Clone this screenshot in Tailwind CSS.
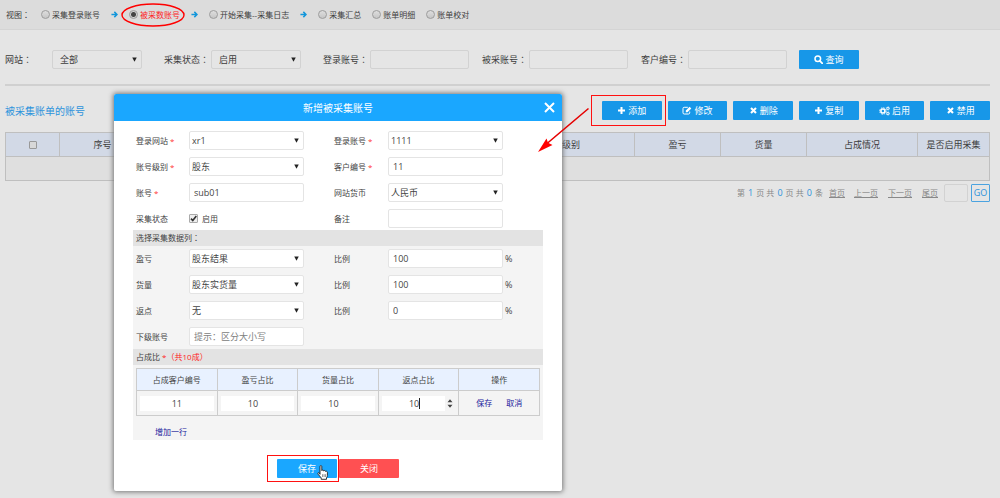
<!DOCTYPE html>
<html lang="zh-CN">
<head>
<meta charset="utf-8">
<title>被采数账号</title>
<script src="https://cdn.jsdelivr.net/npm/@tailwindcss/browser@4"></script>
</head>
<body class="relative min-h-screen overflow-hidden bg-[#e5e5e5] font-['Open_Sans','Noto_Sans_CJK_SC',sans-serif] text-[9px] leading-[12px] text-[#3c3c3c]">

<svg class="hidden">
  <symbol id="arrow" viewBox="0 0 8 8"><path d="M0.5 4H6.5M3.8 1L6.8 4L3.8 7" fill="none" stroke="#1296db" stroke-width="1.7"/></symbol>
  <symbol id="caret" viewBox="0 0 6 6"><path d="M0.3 0.5H5.7L3 5.8Z" fill="#222"/></symbol>
  <symbol id="search" viewBox="0 0 9 9"><circle cx="3.8" cy="3.8" r="2.8" fill="none" stroke="#fff" stroke-width="1.5"/><path d="M5.8 5.8L8.3 8.3" stroke="#fff" stroke-width="1.8" stroke-linecap="round"/></symbol>
  <symbol id="plus" viewBox="0 0 9 9"><path d="M4.5 1V8M1 4.5H8" stroke="#fff" stroke-width="2"/></symbol>
  <symbol id="times" viewBox="0 0 9 9"><path d="M2 2L7 7M7 2L2 7" stroke="#fff" stroke-width="2.1"/></symbol>
  <symbol id="edit" viewBox="0 0 10 9"><path d="M5.8 1.3H2.2Q1 1.3 1 2.5V6.8Q1 8 2.2 8H6.5Q7.7 8 7.7 6.8V5.6" fill="none" stroke="#fff" stroke-width="1"/><path d="M3.8 6.2V4.5L7.6 0.7L9.3 2.4L5.5 6.2Z" fill="#fff"/></symbol>
  <symbol id="cogs" viewBox="0 0 11 10"><circle cx="3.9" cy="5" r="2" fill="none" stroke="#fff" stroke-width="1.5"/><circle cx="3.9" cy="5" r="3.2" fill="none" stroke="#fff" stroke-width="1" stroke-dasharray="1.5 1.01"/><circle cx="8.9" cy="2.4" r="1.1" fill="none" stroke="#fff" stroke-width="1"/><circle cx="8.9" cy="2.4" r="1.8" fill="none" stroke="#fff" stroke-width=".6" stroke-dasharray=".9 .98"/><circle cx="8.9" cy="7.5" r="1.1" fill="none" stroke="#fff" stroke-width="1"/><circle cx="8.9" cy="7.5" r="1.8" fill="none" stroke="#fff" stroke-width=".6" stroke-dasharray=".9 .98"/></symbol>
</svg>

<!-- View switcher -->
<header class="flex h-[30px] items-center gap-[11px] border-b border-[#d4d4d4] bg-[#dcdcdc] pl-[6px] text-[8px]">
  <span class="w-[24px] whitespace-nowrap">视图<span lang="zh-TW" class="font-['Noto_Sans_CJK_TC',sans-serif]">：</span></span>
  <label class="flex items-center gap-[2px]"><input type="radio" name="view" class="size-[9px] appearance-none rounded-full border border-[#9c9c9c] bg-linear-to-b from-[#dedede] to-[#c6c6c6]">采集登录账号</label>
  <svg class="size-[7px]"><use href="#arrow"/></svg>
  <label class="relative flex items-center gap-[2px] text-[#f22]"><input type="radio" name="view" checked class="size-[9px] appearance-none rounded-full border border-[#9c9c9c] bg-[radial-gradient(circle,#444_0_2px,#d2d2d2_3px)]">被采数账号
    <svg class="absolute -top-[6px] -left-[8px] h-[24px] w-[64px]" viewBox="0 0 64 24" fill="none"><ellipse cx="32" cy="12" rx="31" ry="11" stroke="#f00" stroke-width="1.4"/></svg>
  </label>
  <svg class="size-[7px]"><use href="#arrow"/></svg>
  <label class="flex items-center gap-[2px]"><input type="radio" name="view" class="size-[9px] appearance-none rounded-full border border-[#9c9c9c] bg-linear-to-b from-[#dedede] to-[#c6c6c6]">开始采集--采集日志</label>
  <svg class="size-[7px]"><use href="#arrow"/></svg>
  <label class="flex items-center gap-[2px]"><input type="radio" name="view" class="size-[9px] appearance-none rounded-full border border-[#9c9c9c] bg-linear-to-b from-[#dedede] to-[#c6c6c6]">采集汇总</label>
  <label class="flex items-center gap-[2px]"><input type="radio" name="view" class="size-[9px] appearance-none rounded-full border border-[#9c9c9c] bg-linear-to-b from-[#dedede] to-[#c6c6c6]">账单明细</label>
  <label class="flex items-center gap-[2px]"><input type="radio" name="view" class="size-[9px] appearance-none rounded-full border border-[#9c9c9c] bg-linear-to-b from-[#dedede] to-[#c6c6c6]">账单校对</label>
</header>

<main class="pr-[10px] pl-[5px]">
  <!-- Filters -->
  <form class="flex items-center border-b-2 border-[#d0d0d0] pt-5 pb-[15px]">
    <label for="f-site" class="w-[47px]">网站<span lang="zh-TW" class="font-['Noto_Sans_CJK_TC',sans-serif]">：</span></label>
    <span class="relative mr-[22px]">
      <select id="f-site" class="block h-[19px] w-[90px] appearance-none rounded-[2px] border border-[#d2d2d2] pl-[7px]"><option>全部</option></select>
      <svg class="pointer-events-none absolute top-[7px] right-[5px] size-[5px]"><use href="#caret"/></svg>
    </span>
    <label for="f-state" class="w-[47px]">采集状态<span lang="zh-TW" class="font-['Noto_Sans_CJK_TC',sans-serif]">：</span></label>
    <span class="relative mr-[22px]">
      <select id="f-state" class="block h-[19px] w-[90px] appearance-none rounded-[2px] border border-[#d2d2d2] pl-[7px]"><option>启用</option></select>
      <svg class="pointer-events-none absolute top-[7px] right-[5px] size-[5px]"><use href="#caret"/></svg>
    </span>
    <label for="f-login" class="w-[47px]">登录账号<span lang="zh-TW" class="font-['Noto_Sans_CJK_TC',sans-serif]">：</span></label>
    <input id="f-login" class="mr-[13px] h-[19px] w-[99px] rounded-[2px] border border-[#d2d2d2]">
    <label for="f-acct" class="w-[47px]">被采账号<span lang="zh-TW" class="font-['Noto_Sans_CJK_TC',sans-serif]">：</span></label>
    <input id="f-acct" class="mr-[13px] h-[19px] w-[99px] rounded-[2px] border border-[#d2d2d2]">
    <label for="f-cust" class="w-[47px]">客户编号<span lang="zh-TW" class="font-['Noto_Sans_CJK_TC',sans-serif]">：</span></label>
    <input id="f-cust" class="mr-[12px] h-[19px] w-[99px] rounded-[2px] border border-[#d2d2d2]">
    <button type="button" class="flex h-[19px] w-[60px] items-center justify-center gap-[2px] rounded-[1px] bg-[#1797e8] text-white"><svg class="size-[9px]"><use href="#search"/></svg>查询</button>
  </form>

  <!-- Title and actions -->
  <div class="flex items-center justify-between pt-[15px]">
    <h1 class="text-[10px] text-[#2c93dc]">被采集账单的账号</h1>
    <div class="grid w-[388px] grid-cols-6 gap-[6px] text-white">
      <div class="relative">
        <button class="flex h-[19px] w-full items-center justify-center gap-[2px] rounded-[1px] bg-[#1797e8]"><svg class="size-[9px]"><use href="#plus"/></svg>添加</button>
        <span class="pointer-events-none absolute -top-[6px] -right-[4px] -bottom-[6px] -left-[11px] border border-[#f11]"></span>
      </div>
      <button class="flex h-[19px] items-center justify-center gap-[2px] rounded-[1px] bg-[#1797e8]"><svg class="h-[9px] w-[10px]"><use href="#edit"/></svg>修改</button>
      <button class="flex h-[19px] items-center justify-center gap-[2px] rounded-[1px] bg-[#1797e8]"><svg class="size-[9px]"><use href="#times"/></svg>删除</button>
      <button class="flex h-[19px] items-center justify-center gap-[2px] rounded-[1px] bg-[#1797e8]"><svg class="size-[9px]"><use href="#plus"/></svg>复制</button>
      <button class="flex h-[19px] items-center justify-center gap-[2px] rounded-[1px] bg-[#1797e8]"><svg class="h-[10px] w-[11px]"><use href="#cogs"/></svg>启用</button>
      <button class="flex h-[19px] items-center justify-center gap-[2px] rounded-[1px] bg-[#1797e8]"><svg class="size-[9px]"><use href="#times"/></svg>禁用</button>
    </div>
  </div>

  <table class="mt-3 w-full table-fixed border-collapse border border-[#bfbfbf] text-center">
    <colgroup><col class="w-[54px]"><col class="w-[86px]"><col><col class="w-[145px]"><col class="w-[86px]"><col class="w-[86px]"><col class="w-[111px]"><col class="w-[72px]"></colgroup>
    <thead class="bg-[#d2d9e6]">
      <tr class="h-[24px]">
        <th class="border border-[#bfbfbf]"><input type="checkbox" aria-label="全选" class="mx-auto block size-[8px] appearance-none rounded-[1px] border border-[#999] bg-[#d8d8d8]"></th>
        <th class="border border-[#bfbfbf] font-normal">序号</th>
        <th class="border border-[#bfbfbf] font-normal"></th>
        <th class="border border-[#bfbfbf] font-normal">账号级别</th>
        <th class="border border-[#bfbfbf] font-normal">盈亏</th>
        <th class="border border-[#bfbfbf] font-normal">货量</th>
        <th class="border border-[#bfbfbf] font-normal">占成情况</th>
        <th class="border border-[#bfbfbf] font-normal">是否启用采集</th>
      </tr>
    </thead>
    <tbody class="bg-[#dfdfdf]"><tr class="h-[24px]"><td colspan="8"></td></tr></tbody>
  </table>

  <nav class="mt-[3px] flex items-center justify-end text-[8px] text-[#888]">
    <span class="mr-[6px]">第 <b class="px-px text-[9px] font-normal text-[#2c93dc]">1</b> 页 共 <b class="px-px text-[9px] font-normal text-[#2c93dc]">0</b> 页 共 <b class="px-px text-[9px] font-normal text-[#2c93dc]">0</b> 条</span>
    <a href="#" class="mr-[9px] underline">首页</a>
    <a href="#" class="mr-[10px] underline">上一页</a>
    <a href="#" class="mr-[10px] underline">下一页</a>
    <a href="#" class="mr-[6px] underline">尾页</a>
    <input aria-label="页码" class="mr-[3px] h-[18px] w-[24px] rounded-[2px] border border-[#d2d2d2]">
    <button class="h-[18px] w-[19px] rounded-[1px] border border-[#4ba3e0] text-[9px] text-[#2c93dc]">GO</button>
  </nav>
</main>

<!-- Dialog -->
<section role="dialog" aria-labelledby="dlg-title" class="absolute top-[94px] left-[114px] w-[448px] max-w-full rounded-[2px] bg-white pb-[13px] text-[#444] shadow-[0_0_5px_1px_#777]">
  <div class="relative flex h-[27px] items-center justify-center rounded-t-[2px] bg-[#1aa7ff] text-white">
    <h2 id="dlg-title" class="text-[10px]">新增被采集账号</h2>
    <button aria-label="关闭对话框" class="absolute top-2 right-[7px]"><svg class="size-[11px]" viewBox="0 0 11 11"><path d="M1 1L10 10M10 1L1 10" stroke="#fff" stroke-width="2"/></svg></button>
  </div>

  <form class="px-[19px] pt-[10px]">
    <div class="grid grid-cols-[53px_115px_84px_115px_1fr] items-center gap-y-[7px] pl-[3px]">
      <label for="d-site" class="text-[8px]">登录网站 <i class="text-[#f33] not-italic">*</i></label>
      <span class="relative"><select id="d-site" class="block h-[19px] w-full appearance-none rounded-[2px] border border-[#e4e4e4] bg-white pl-[2px]"><option>xr1</option></select><svg class="pointer-events-none absolute top-[7px] right-[5px] size-[5px]"><use href="#caret"/></svg></span>
      <label for="d-login" class="pl-[30px] text-[8px]">登录账号 <i class="text-[#f33] not-italic">*</i></label>
      <span class="relative"><select id="d-login" class="block h-[19px] w-full appearance-none rounded-[2px] border border-[#e4e4e4] bg-white pl-[2px]"><option>1111</option></select><svg class="pointer-events-none absolute top-[7px] right-[5px] size-[5px]"><use href="#caret"/></svg></span>
      <span></span>

      <label for="d-level" class="text-[8px]">账号级别 <i class="text-[#f33] not-italic">*</i></label>
      <span class="relative"><select id="d-level" class="block h-[19px] w-full appearance-none rounded-[2px] border border-[#e4e4e4] bg-white pl-[2px]"><option>股东</option></select><svg class="pointer-events-none absolute top-[7px] right-[5px] size-[5px]"><use href="#caret"/></svg></span>
      <label for="d-cust" class="pl-[30px] text-[8px]">客户编号 <i class="text-[#f33] not-italic">*</i></label>
      <input id="d-cust" value="11" class="h-[19px] min-w-0 rounded-[2px] border border-[#e4e4e4] bg-white pl-[4px]">
      <span></span>

      <label for="d-acct" class="text-[8px]">账号 <i class="text-[#f33] not-italic">*</i></label>
      <input id="d-acct" value="sub01" class="h-[19px] min-w-0 rounded-[2px] border border-[#e4e4e4] bg-white pl-[4px]">
      <label for="d-cur" class="pl-[30px] text-[8px]">网站货币</label>
      <span class="relative"><select id="d-cur" class="block h-[19px] w-full appearance-none rounded-[2px] border border-[#e4e4e4] bg-white pl-[2px]"><option>人民币</option></select><svg class="pointer-events-none absolute top-[7px] right-[5px] size-[5px]"><use href="#caret"/></svg></span>
      <span></span>

      <span class="text-[8px]">采集状态</span>
      <label class="flex items-center gap-[4px] text-[8px]">
        <span class="relative flex"><input type="checkbox" checked class="size-[9px] appearance-none rounded-[1px] border border-[#aaa] bg-[#eee]"><svg class="pointer-events-none absolute inset-0 size-[9px]" viewBox="0 0 9 9"><path d="M2 4.6L3.8 6.6L7.3 2" fill="none" stroke="#333" stroke-width="1.6"/></svg></span>启用</label>
      <label for="d-note" class="pl-[30px] text-[8px]">备注</label>
      <input id="d-note" class="h-[19px] min-w-0 rounded-[2px] border border-[#e4e4e4] bg-white pl-[4px]">
      <span></span>
    </div>

    <div class="mt-[2px] bg-[#f4f4f4]">
      <h3 class="flex h-[16px] items-center bg-[#e3e3e3] pl-[3px] text-[8px]">选择采集数据列<span lang="zh-TW" class="font-['Noto_Sans_CJK_TC',sans-serif]">：</span></h3>
      <div class="grid grid-cols-[53px_115px_84px_115px_1fr] items-center gap-y-[7px] py-[3px] pl-[3px]">
        <label for="d-pl" class="text-[8px]">盈亏</label>
        <span class="relative"><select id="d-pl" class="block h-[19px] w-full appearance-none rounded-[2px] border border-[#e4e4e4] bg-white pl-[2px]"><option>股东结果</option></select><svg class="pointer-events-none absolute top-[7px] right-[5px] size-[5px]"><use href="#caret"/></svg></span>
        <label for="d-r1" class="pl-[30px] text-[8px]">比例</label>
        <input id="d-r1" value="100" class="h-[19px] min-w-0 rounded-[2px] border border-[#e4e4e4] bg-white pl-[4px]">
        <span class="pl-[2px]">%</span>

        <label for="d-vol" class="text-[8px]">货量</label>
        <span class="relative"><select id="d-vol" class="block h-[19px] w-full appearance-none rounded-[2px] border border-[#e4e4e4] bg-white pl-[2px]"><option>股东实货量</option></select><svg class="pointer-events-none absolute top-[7px] right-[5px] size-[5px]"><use href="#caret"/></svg></span>
        <label for="d-r2" class="pl-[30px] text-[8px]">比例</label>
        <input id="d-r2" value="100" class="h-[19px] min-w-0 rounded-[2px] border border-[#e4e4e4] bg-white pl-[4px]">
        <span class="pl-[2px]">%</span>

        <label for="d-reb" class="text-[8px]">返点</label>
        <span class="relative"><select id="d-reb" class="block h-[19px] w-full appearance-none rounded-[2px] border border-[#e4e4e4] bg-white pl-[2px]"><option>无</option></select><svg class="pointer-events-none absolute top-[7px] right-[5px] size-[5px]"><use href="#caret"/></svg></span>
        <label for="d-r3" class="pl-[30px] text-[8px]">比例</label>
        <input id="d-r3" value="0" class="h-[19px] min-w-0 rounded-[2px] border border-[#e4e4e4] bg-white pl-[4px]">
        <span class="pl-[2px]">%</span>

        <label for="d-sub" class="text-[8px]">下级账号</label>
        <input id="d-sub" placeholder="提示：区分大小写" class="h-[19px] min-w-0 rounded-[2px] border border-[#e4e4e4] bg-white pl-[4px] placeholder:text-[#808080]">
      </div>

      <h3 class="flex h-[16px] items-center bg-[#e3e3e3] pl-[3px] text-[8px]"><span>占成比 <span class="text-[#f22]">*（共10成）</span></span></h3>
      <div class="px-[3px] pt-[3px]">
        <table class="w-full table-fixed border-collapse border border-[#ccc] text-center text-[8px]">
          <thead class="bg-[#e8f1ff]">
            <tr class="h-[22px]">
              <th class="border border-[#ccc] font-normal">占成客户编号</th>
              <th class="border border-[#ccc] font-normal">盈亏占比</th>
              <th class="border border-[#ccc] font-normal">货量占比</th>
              <th class="border border-[#ccc] font-normal">返点占比</th>
              <th class="border border-[#ccc] font-normal">操作</th>
            </tr>
          </thead>
          <tbody>
            <tr class="h-[25px]">
              <td class="border border-[#ccc] px-[3px]"><input aria-label="占成客户编号" value="11" class="block h-[15px] w-full bg-white text-center text-[9px]"></td>
              <td class="border border-[#ccc] px-[3px]"><input aria-label="盈亏占比" value="10" class="block h-[15px] w-full bg-white pr-[9px] text-center text-[9px]"></td>
              <td class="border border-[#ccc] px-[3px]"><input aria-label="货量占比" value="10" class="block h-[15px] w-full bg-white pr-[9px] text-center text-[9px]"></td>
              <td class="border border-[#ccc] px-[3px]"><div class="relative"><input aria-label="返点占比" value="10" class="block h-[15px] w-full bg-white pr-[9px] text-center text-[9px]">
                <span class="absolute top-[2px] left-[37px] h-[11px] w-px bg-[#222]"></span>
                <svg class="absolute top-0 right-0 h-[15px] w-[10px] bg-[#f4f4f4]" viewBox="0 0 10 15"><path d="M2.5 6.3L5 3.3L7.5 6.3ZM2.5 8.7L5 11.7L7.5 8.7Z" fill="#444"/></svg></div></td>
              <td class="border border-[#ccc]"><a href="#" class="mr-[14px] text-[#22229c]">保存</a><a href="#" class="text-[#22229c]">取消</a></td>
            </tr>
          </tbody>
        </table>
        <a href="#" class="mt-[10px] ml-[19px] inline-block pb-[2px] text-[8px] text-[#22229c]">增加一行</a>
      </div>
    </div>

    <div class="mt-[19px] flex justify-center gap-[2px] text-white">
      <div class="relative">
        <button type="button" class="block h-[19px] w-[60px] rounded-[1px] bg-[#1aa7ff]">保存</button>
        <span class="pointer-events-none absolute -top-[4px] -right-[2px] -bottom-[4px] -left-[10px] border border-[#f11]"></span>
        <svg class="pointer-events-none absolute top-[6px] right-[8px] h-[15px] w-[12px]" viewBox="0 0 12 15"><path d="M3 9.3V1.6Q3 .6 3.9 .6T4.8 1.6V5.6Q5 4.9 5.7 5T6.6 5.9Q7 5.3 7.6 5.5T8.4 6.4Q8.8 5.9 9.5 6.2T10.4 7.2V10.6Q10.4 12 9.5 12.8V14.3H4.2V12.9L1.2 9.3Q.5 8.3 1.2 7.8T2.4 8.2Z" fill="#fff" stroke="#222" stroke-width=".9"/><path d="M5.6 9.2V12M7.1 9.2V12M8.6 9.2V12" stroke="#444" stroke-width=".6"/></svg>
      </div>
      <button type="button" class="h-[19px] w-[60px] rounded-[1px] bg-[#ff5052]">关闭</button>
    </div>
  </form>
</section>

<!-- Callout arrow from the add button to the dialog -->
<svg class="pointer-events-none absolute top-[106px] left-[537px] h-[48px] w-[54px]" viewBox="0 0 54 48"><path d="M51.5 2.5L10 37.5" stroke="#e60000" stroke-width="1.6"/><path d="M1 46L9.5 32.5L11 36.8L15.5 39Z" fill="#f00"/></svg>
</body>
</html>
